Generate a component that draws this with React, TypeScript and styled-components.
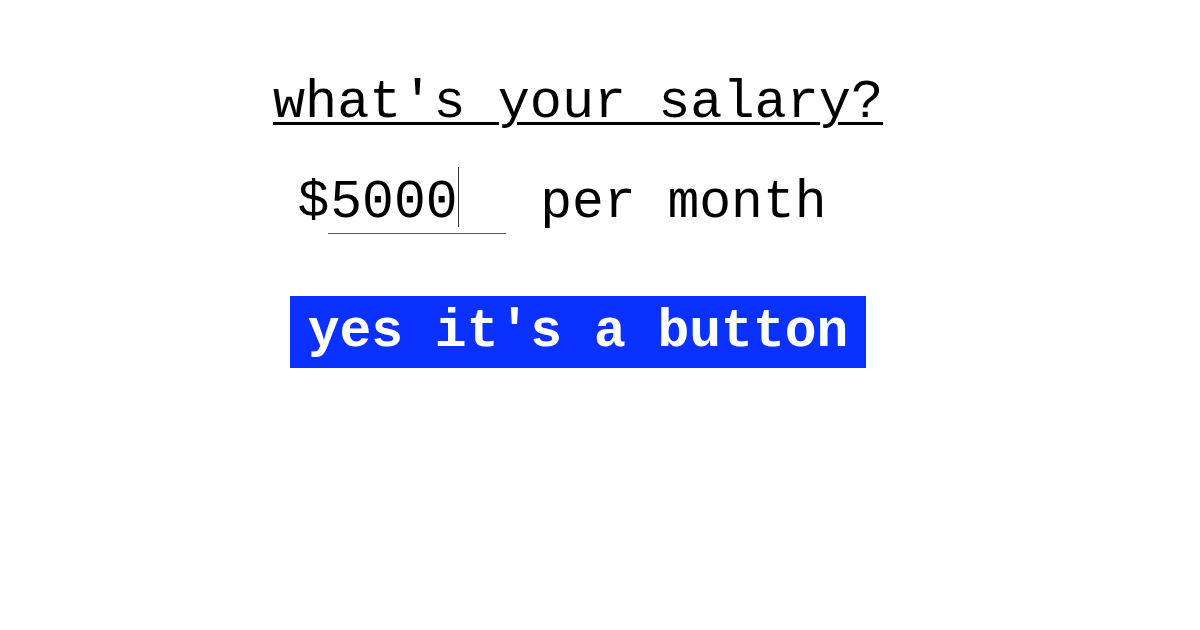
import React from "react";
import styled, { createGlobalStyle } from "styled-components";

const Global = createGlobalStyle`
  html, body { margin: 0; padding: 0; background: #ffffff; }
  body { font-family: "Liberation Mono", "Courier New", monospace; color: #000; }
`;

const Page = styled.main`
  width: 1156px;
  display: flex;
  flex-direction: column;
  align-items: center;
  padding-top: 68px;
`;

const Title = styled.h1`
  margin: 0;
  font-size: 53.5px;
  font-weight: 400;
  line-height: 70px;
  text-decoration: underline;
  text-decoration-thickness: 3px;
  text-underline-offset: 5px;
`;

const Row = styled.div`
  display: flex;
  align-items: baseline;
  margin-top: 30px;
  margin-right: 36px;
  font-size: 53px;
  line-height: 70px;
`;

const Dollar = styled.span`
  margin: 0 -4px 0 4px;
`;

const Field = styled.span`
  position: relative;
  display: inline-block;
  margin: 0 34px 0 3px;
`;

const Amount = styled.input`
  width: 178px;
  border: none;
  border-bottom: 1px solid #555;
  padding: 0 0 0 2px;
  font-family: "Liberation Mono", "Courier New", monospace;
  font-size: 53px;
  line-height: 60px;
  height: 60px;
  outline: none;
  background: transparent;
  color: #000;
  box-sizing: border-box;
  caret-color: transparent;
`;

const Caret = styled.span`
  position: absolute;
  left: 130px;
  top: -1px;
  width: 1px;
  height: 60px;
  background: #333;
`;

const Unit = styled.span``;

const Button = styled.button`
  margin-top: 58px;
  background: #0b31ff;
  color: #fff;
  border: none;
  padding: 0 18px;
  height: 72px;
  font-family: "Liberation Mono", "Courier New", monospace;
  font-size: 53px;
  font-weight: 700;
  cursor: pointer;
`;

export default function App() {
  return (
    <>
      <Global />
      <Page>
        <Title>what's your salary?</Title>
        <Row>
          <Dollar>$</Dollar>
          <Field>
            <Amount defaultValue="5000" />
            <Caret />
          </Field>
          <Unit>per month</Unit>
        </Row>
        <Button>yes it's a button</Button>
      </Page>
    </>
  );
}
